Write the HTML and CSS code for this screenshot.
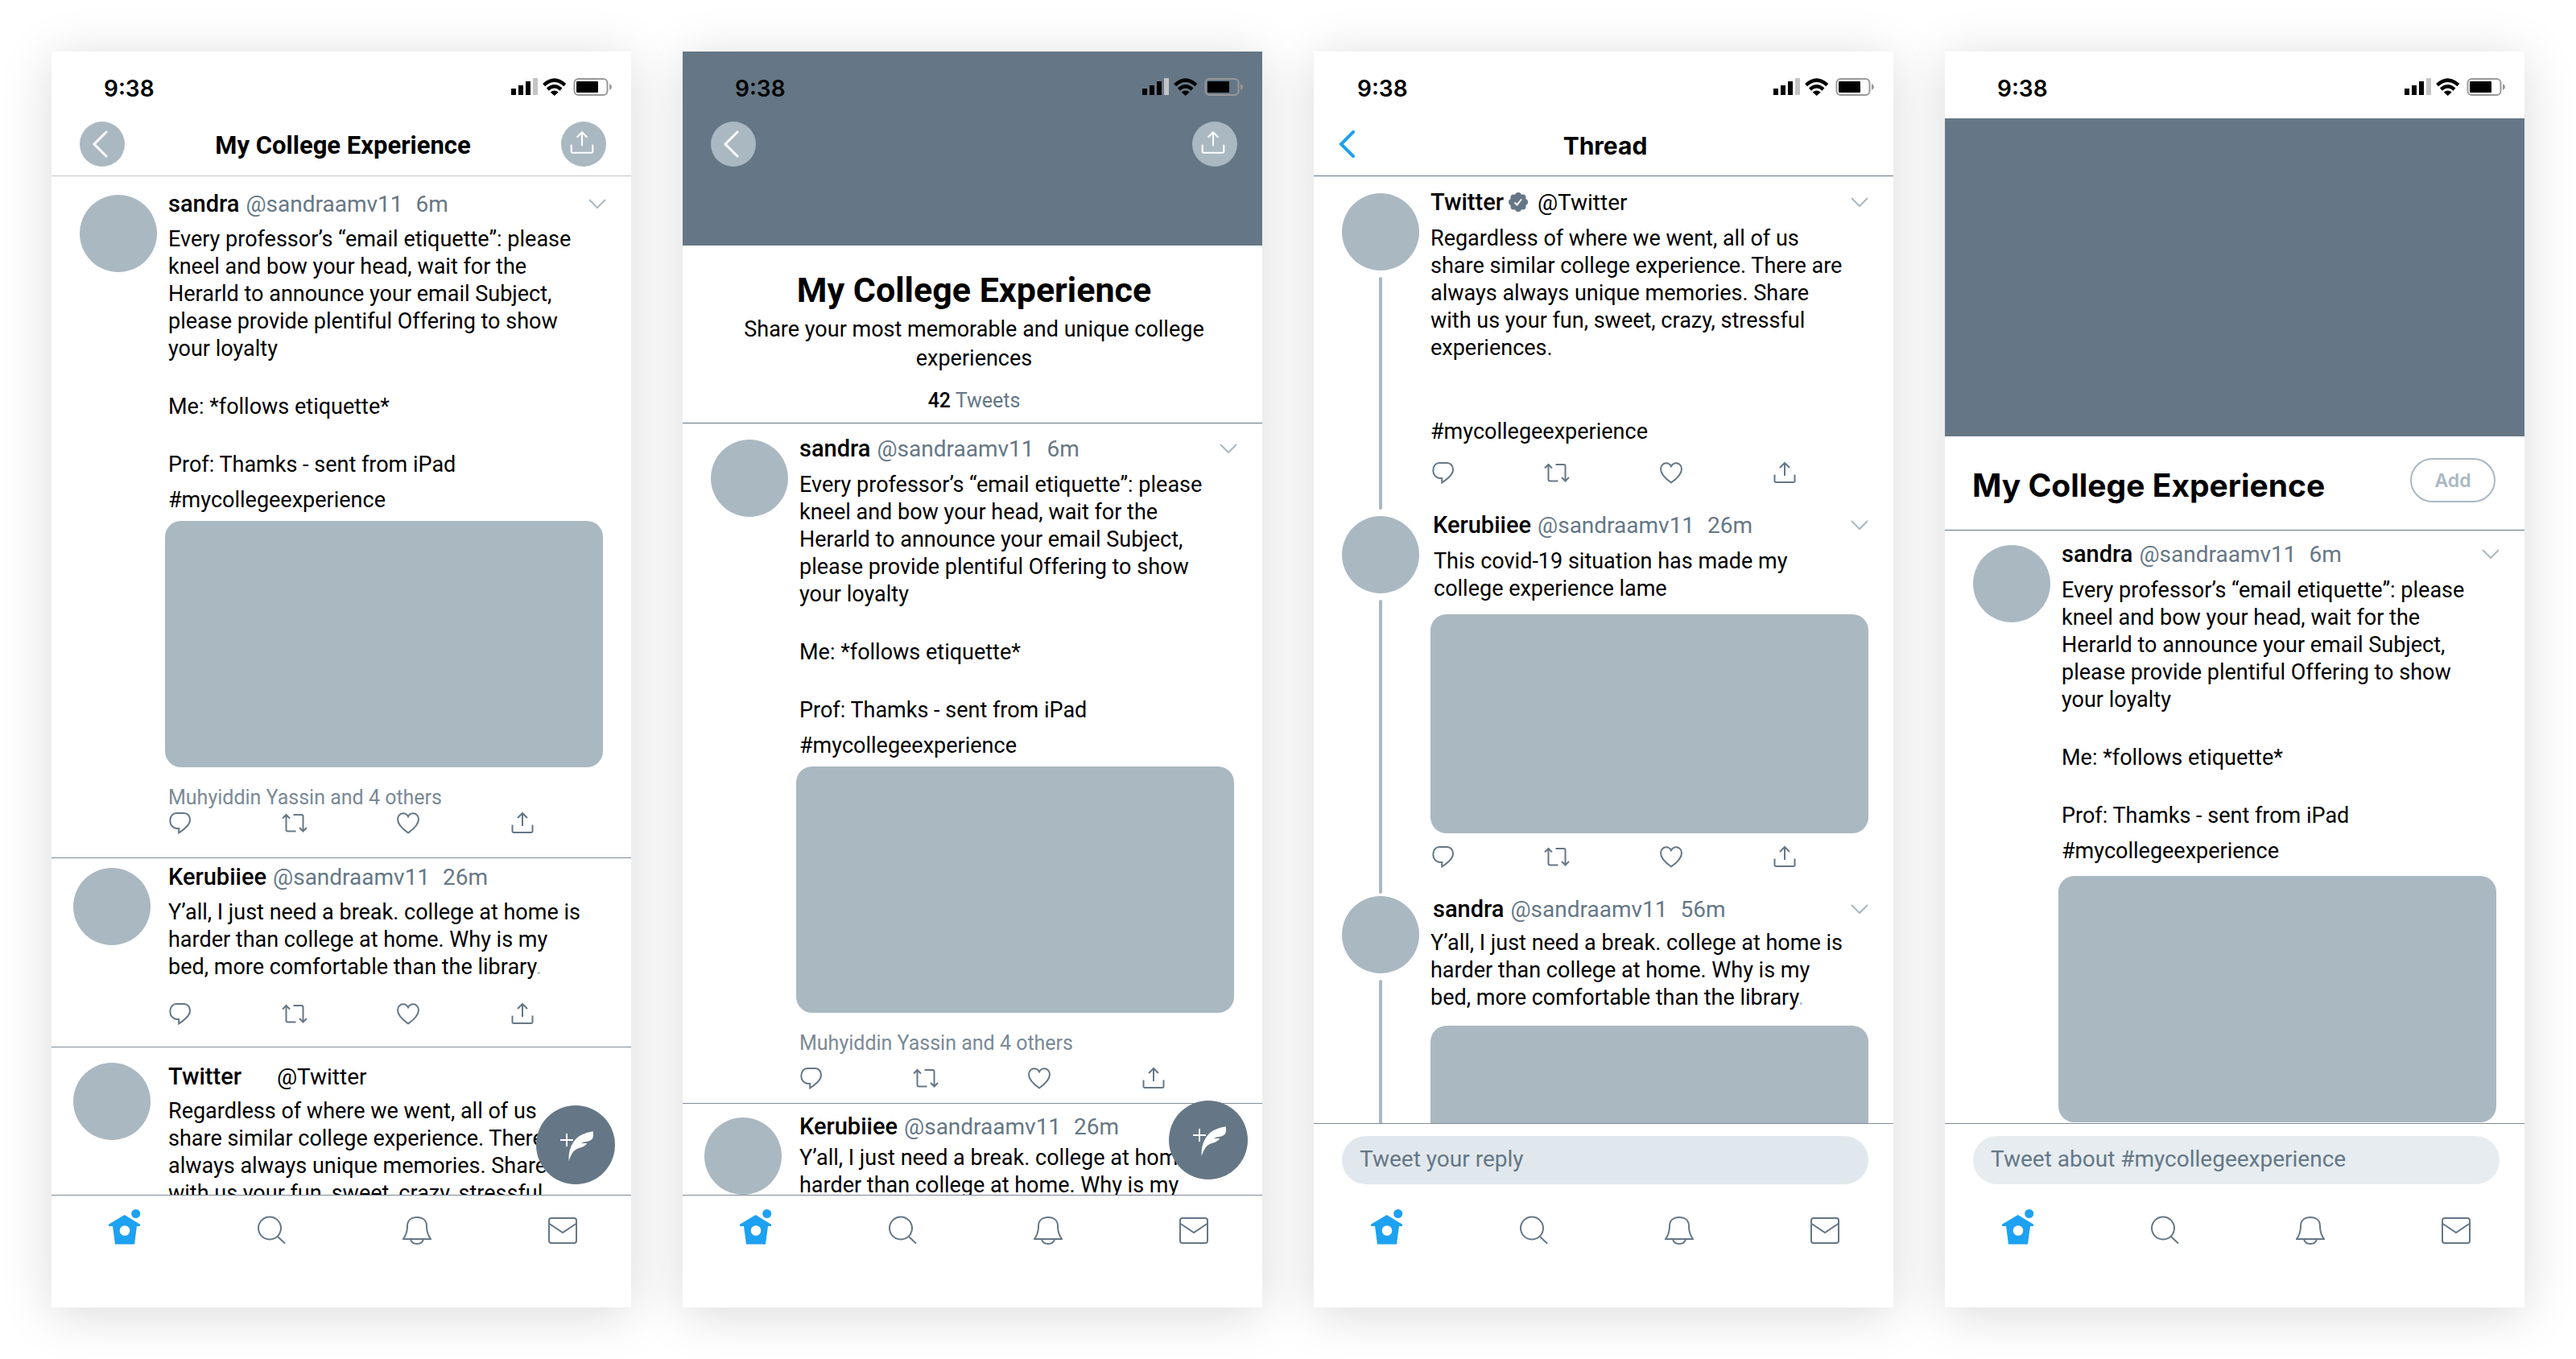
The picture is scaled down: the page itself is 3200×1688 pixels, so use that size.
FILE: index.html
```html
<!DOCTYPE html>
<html lang="en">
<head>
<meta charset="utf-8">
<title>My College Experience</title>
<link rel="stylesheet" href="styles.css">
</head>
<body>
<svg class="sprite" aria-hidden="true">
  <symbol id="status" viewBox="0 0 126 22">
    <path d="M0 13h6v8H0zM9 9h6v12H9zM18 4h6v17h-6z"/>
    <path fill="#c4c4c4" d="M27 0h6v21h-6z"/>
    <path fill="none" stroke="#000" stroke-width="4.4" d="M40.600 8.600Q53.700-3.400 66.800 8.600M45.400 14Q53.700 6.600 62 14"/>
    <path d="M48.700 17.500Q53.700 13.300 58.700 17.500L53.700 22z"/>
    <rect x="78.500" y="1" width="41" height="20" rx="5" fill="none" stroke="#999" stroke-width="2"/>
    <rect x="81" y="4" width="27" height="14" rx="1"/>
    <path fill="#999" d="M122 7q3 1.500 3 4t-3 4z"/>
  </symbol>
  <symbol id="comment" viewBox="0 0 32 32"><path d="M11 4h9.500c4.400 0 7.500 3.400 7.500 8 0 3.600-1.800 6.600-4.600 9.200-2.400 2.400-5.600 5-9.200 7.300v-5.600H12C7 22.900 3.300 18.600 3.300 13.400 3.300 8 6.500 4 11 4z"/></symbol>
  <symbol id="retweet" viewBox="0 0 32 32"><path d="M5.500 6v18.500a2 2 0 0 0 2 2h10M1 10.500 5.500 6l4.500 4.500M14.500 6h10a2 2 0 0 1 2 2v19M22 22l4.500 4.500L31 22"/></symbol>
  <symbol id="heart" viewBox="0 0 32 32"><path d="M16 28.500C11 25 3 19 3 11.500 3 7.500 6 4.200 9.700 4.200c2.600 0 5 1.500 6.300 4 1.300-2.500 3.700-4 6.300-4 3.700 0 6.700 3.300 6.700 7.300 0 7.500-8 13.500-13 17z"/></symbol>
  <symbol id="share" viewBox="0 0 32 32"><path d="M3.500 18.500v8a1.500 1.500 0 0 0 1.500 1.500h22a1.500 1.500 0 0 0 1.500-1.500v-8M16 20V4M10 10l6-6 6 6"/></symbol>
  <symbol id="down" viewBox="0 0 22 14"><path d="M1 2l10 10L21 2"/></symbol>
  <symbol id="back" viewBox="0 0 20 34"><path d="M18 2 3 17l15 15"/></symbol>
  <symbol id="home" viewBox="0 0 40 44"><path fill-rule="evenodd" d="M19.700 7 39 18.800V21h-4l-3 22.500H8L5 21H0v-2.200zM20 20.200a6.300 6.300 0 1 0 0 12.600 6.300 6.300 0 0 0 0-12.600z"/><circle cx="33.700" cy="5.500" r="5.500"/></symbol>
  <symbol id="search" viewBox="0 0 36 36"><circle cx="15" cy="15.500" r="14"/><path d="M25 26l9 8.500"/></symbol>
  <symbol id="bell" viewBox="0 0 36 36"><path d="M1 29C5 23.500 6 18.500 6 13 6 5.500 11 2 18 2s12 3.500 12 11c0 5.500 1 10.500 5 16zM10 29.500c1 3.500 4 5.500 8 5.500s7-2 8-5.500"/></symbol>
  <symbol id="mail" viewBox="0 0 36 36"><rect x="1" y="3" width="34" height="31" rx="3"/><path d="M1.500 10 18 21l16.500-11"/></symbol>
  <symbol id="quill" viewBox="0 0 98 98">
    <path fill="none" stroke="#fff" stroke-width="2" d="M30 43h16M38 35v16"/>
    <path fill="#fff" d="M40.700 69c-.7-9 1.300-17 6-24 5.600-8 14.300-11 24-12.700.6 4 .5 7-.7 9-2 3-6.500 3.700-10.500 4.200-1.600.4-2.500 1-3.200 2 2.400-.6 4.600-.5 7-.2-2.200 3.200-5.800 4.700-10.600 6-6.500 2-9.500 8-12 15.700z"/>
  </symbol>
  <symbol id="verified" viewBox="0 0 24 24">
    <g fill="#657786"><circle cx="12" cy="12" r="9"/><circle cx="12" cy="4" r="4"/><circle cx="12" cy="20" r="4"/><circle cx="4" cy="12" r="4"/><circle cx="20" cy="12" r="4"/><circle cx="6.400" cy="6.400" r="4"/><circle cx="17.600" cy="6.400" r="4"/><circle cx="6.400" cy="17.600" r="4"/><circle cx="17.600" cy="17.600" r="4"/></g>
    <path fill="none" stroke="#fff" stroke-width="2" d="M7.500 12.500l3 3 5.500-7"/>
  </symbol>
</svg>

<main class="board">
  <!-- Moment, scrolled -->
  <section class="phone">
    <div class="status"><time>9:38</time><svg><use href="#status"/></svg></div>
    <header class="bar ruled soft">
      <button class="round" aria-label="Back"><svg class="i-back"><use href="#back"/></svg></button>
      <h1>My College Experience</h1>
      <button class="round" aria-label="Share"><svg class="i-share"><use href="#share"/></svg></button>
    </header>
    <div class="feed">
      <article class="tweet first">
        <div class="rail"><div class="avatar"></div></div>
        <div class="content">
          <div class="byline"><b>sandra</b><a href="#">@sandraamv11</a><span>6m</span><button aria-label="More"><svg><use href="#down"/></svg></button></div>
          <div class="text">
            <p>Every professor’s “email etiquette”: please kneel and bow your head, wait for the Herarld to announce your email Subject, please provide plentiful Offering to show your loyalty</p>
            <p>Me: *follows etiquette*</p>
            <p>Prof: Thamks - sent from iPad</p>
            <p class="tag">#mycollegeexperience</p>
          </div>
          <div class="media"></div>
          <p class="others">Muhyiddin Yassin and 4 others</p>
          <div class="actions"><button aria-label="Reply"><svg><use href="#comment"/></svg></button><button aria-label="Retweet"><svg><use href="#retweet"/></svg></button><button aria-label="Like"><svg><use href="#heart"/></svg></button><button aria-label="Share"><svg><use href="#share"/></svg></button></div>
        </div>
      </article>
      <article class="tweet near short">
        <div class="rail"><div class="avatar"></div></div>
        <div class="content">
          <div class="byline"><b>Kerubiiee</b><a href="#">@sandraamv11</a><span>26m</span></div>
          <div class="text"><p>Y’all, I just need a break. college at home is harder than college at home. Why is my bed, more comfortable than the library<i>.</i></p></div>
          <div class="actions"><button aria-label="Reply"><svg><use href="#comment"/></svg></button><button aria-label="Retweet"><svg><use href="#retweet"/></svg></button><button aria-label="Like"><svg><use href="#heart"/></svg></button><button aria-label="Share"><svg><use href="#share"/></svg></button></div>
        </div>
      </article>
      <article class="tweet near last">
        <div class="rail"><div class="avatar"></div></div>
        <div class="content">
          <div class="byline official plain"><b>Twitter</b><a href="#">@Twitter</a></div>
          <div class="text"><p>Regardless of where we went, all of us share similar college experience. There are always always unique memories. Share with us your fun, sweet, crazy, stressful experiences.</p></div>
        </div>
      </article>
    </div>
    <nav class="tabs ruled-top">
      <button class="compose" aria-label="New Tweet"><svg><use href="#quill"/></svg></button>
      <a href="#" class="home" aria-label="Home"><svg><use href="#home"/></svg></a><a href="#" aria-label="Search"><svg><use href="#search"/></svg></a><a href="#" aria-label="Notifications"><svg><use href="#bell"/></svg></a><a href="#" aria-label="Messages"><svg><use href="#mail"/></svg></a>
    </nav>
  </section>

  <!-- Moment, cover -->
  <section class="phone cover">
    <div class="banner">
      <div class="status"><time>9:38</time><svg><use href="#status"/></svg></div>
      <div class="bar">
        <button class="round" aria-label="Back"><svg class="i-back"><use href="#back"/></svg></button>
        <button class="round" aria-label="Share"><svg class="i-share"><use href="#share"/></svg></button>
      </div>
    </div>
    <header class="intro ruled">
      <h1>My College Experience</h1>
      <p>Share your most memorable and unique college experiences</p>
      <p class="count"><b>42</b> Tweets</p>
    </header>
    <div class="feed">
      <article class="tweet first">
        <div class="rail"><div class="avatar"></div></div>
        <div class="content">
          <div class="byline"><b>sandra</b><a href="#">@sandraamv11</a><span>6m</span><button aria-label="More"><svg><use href="#down"/></svg></button></div>
          <div class="text">
            <p>Every professor’s “email etiquette”: please kneel and bow your head, wait for the Herarld to announce your email Subject, please provide plentiful Offering to show your loyalty</p>
            <p>Me: *follows etiquette*</p>
            <p>Prof: Thamks - sent from iPad</p>
            <p class="tag">#mycollegeexperience</p>
          </div>
          <div class="media"></div>
          <p class="others">Muhyiddin Yassin and 4 others</p>
          <div class="actions"><button aria-label="Reply"><svg><use href="#comment"/></svg></button><button aria-label="Retweet"><svg><use href="#retweet"/></svg></button><button aria-label="Like"><svg><use href="#heart"/></svg></button><button aria-label="Share"><svg><use href="#share"/></svg></button></div>
        </div>
      </article>
      <article class="tweet near last">
        <div class="rail"><div class="avatar"></div></div>
        <div class="content">
          <div class="byline"><b>Kerubiiee</b><a href="#">@sandraamv11</a><span>26m</span></div>
          <div class="text"><p>Y’all, I just need a break. college at home is harder than college at home. Why is my bed, more comfortable than the library<i>.</i></p></div>
        </div>
      </article>
    </div>
    <nav class="tabs ruled-top">
      <button class="compose" aria-label="New Tweet"><svg><use href="#quill"/></svg></button>
      <a href="#" class="home" aria-label="Home"><svg><use href="#home"/></svg></a><a href="#" aria-label="Search"><svg><use href="#search"/></svg></a><a href="#" aria-label="Notifications"><svg><use href="#bell"/></svg></a><a href="#" aria-label="Messages"><svg><use href="#mail"/></svg></a>
    </nav>
  </section>

  <!-- Thread -->
  <section class="phone thread">
    <div class="status"><time>9:38</time><svg><use href="#status"/></svg></div>
    <header class="bar ruled">
      <button class="bare" aria-label="Back"><svg class="i-back"><use href="#back"/></svg></button>
      <h1>Thread</h1>
    </header>
    <div class="feed">
      <article class="tweet lead">
        <div class="rail"><div class="avatar"></div></div>
        <div class="content">
          <div class="byline official"><b>Twitter</b><svg class="badge" role="img" aria-label="Verified"><use href="#verified"/></svg><a href="#">@Twitter</a><button aria-label="More"><svg><use href="#down"/></svg></button></div>
          <div class="text">
            <p>Regardless of where we went, all of us share similar college experience. There are always always unique memories. Share with us your fun, sweet, crazy, stressful experiences.</p>
            <p class="tag">#mycollegeexperience</p>
          </div>
          <div class="actions"><button aria-label="Reply"><svg><use href="#comment"/></svg></button><button aria-label="Retweet"><svg><use href="#retweet"/></svg></button><button aria-label="Like"><svg><use href="#heart"/></svg></button><button aria-label="Share"><svg><use href="#share"/></svg></button></div>
        </div>
      </article>
      <article class="tweet reply inset">
        <div class="rail"><div class="avatar"></div></div>
        <div class="content">
          <div class="byline"><b>Kerubiiee</b><a href="#">@sandraamv11</a><span>26m</span><button aria-label="More"><svg><use href="#down"/></svg></button></div>
          <div class="text"><p>This covid-19 situation has made my college experience lame</p></div>
          <div class="media"></div>
          <div class="actions"><button aria-label="Reply"><svg><use href="#comment"/></svg></button><button aria-label="Retweet"><svg><use href="#retweet"/></svg></button><button aria-label="Like"><svg><use href="#heart"/></svg></button><button aria-label="Share"><svg><use href="#share"/></svg></button></div>
        </div>
      </article>
      <article class="tweet reply last">
        <div class="rail"><div class="avatar"></div></div>
        <div class="content">
          <div class="byline"><b>sandra</b><a href="#">@sandraamv11</a><span>56m</span><button aria-label="More"><svg><use href="#down"/></svg></button></div>
          <div class="text"><p>Y’all, I just need a break. college at home is harder than college at home. Why is my bed, more comfortable than the library<i>.</i></p></div>
          <div class="media"></div>
        </div>
      </article>
    </div>
    <form class="composer"><input type="text" aria-label="Tweet your reply" placeholder="Tweet your reply"></form>
    <nav class="tabs">
      <a href="#" class="home" aria-label="Home"><svg><use href="#home"/></svg></a><a href="#" aria-label="Search"><svg><use href="#search"/></svg></a><a href="#" aria-label="Notifications"><svg><use href="#bell"/></svg></a><a href="#" aria-label="Messages"><svg><use href="#mail"/></svg></a>
    </nav>
  </section>

  <!-- Topic -->
  <section class="phone topic">
    <div class="status"><time>9:38</time><svg><use href="#status"/></svg></div>
    <div class="hero"></div>
    <header class="titlebar ruled"><h1>My College Experience</h1><button class="add">Add</button></header>
    <div class="feed">
      <article class="tweet first">
        <div class="rail"><div class="avatar"></div></div>
        <div class="content">
          <div class="byline"><b>sandra</b><a href="#">@sandraamv11</a><span>6m</span><button aria-label="More"><svg><use href="#down"/></svg></button></div>
          <div class="text">
            <p>Every professor’s “email etiquette”: please kneel and bow your head, wait for the Herarld to announce your email Subject, please provide plentiful Offering to show your loyalty</p>
            <p>Me: *follows etiquette*</p>
            <p>Prof: Thamks - sent from iPad</p>
            <p class="tag">#mycollegeexperience</p>
          </div>
          <div class="media"></div>
        </div>
      </article>
    </div>
    <form class="composer"><input type="text" aria-label="Tweet about #mycollegeexperience" placeholder="Tweet about #mycollegeexperience"></form>
    <nav class="tabs">
      <a href="#" class="home" aria-label="Home"><svg><use href="#home"/></svg></a><a href="#" aria-label="Search"><svg><use href="#search"/></svg></a><a href="#" aria-label="Notifications"><svg><use href="#bell"/></svg></a><a href="#" aria-label="Messages"><svg><use href="#mail"/></svg></a>
    </nav>
  </section>
</main>
</body>
</html>
```
FILE: styles.css
```css
:root {
  --slate: #657786;
  --mist: #aab8c2;
  --rule: #7e8c99;
  --blue: #1da1f2;
}

* { box-sizing: border-box; }

body {
  margin: 0;
  background: #fff;
  color: #000;
  font-family: Roboto, "Liberation Sans", sans-serif;
  font-size: 27px;
  line-height: 34px;
}

h1, p { margin: 0; }
a { color: inherit; text-decoration: none; }
svg { display: block; fill: none; }
button {
  display: block;
  padding: 0;
  border: 0;
  background: none;
  color: inherit;
  font: inherit;
}

.sprite { position: absolute; width: 0; height: 0; }

.board {
  display: grid;
  grid-template-columns: repeat(4, minmax(0, 1fr));
  gap: 64px;
  padding: 64px;
}

.phone {
  display: flex;
  flex-direction: column;
  height: calc(100vh - 128px);
  min-width: 0;
  background: #fff;
  box-shadow: 0 8px 60px rgba(0, 0, 0, .15);
}

/* Status bar */
.status {
  display: flex;
  justify-content: space-between;
  flex: none;
  height: 83px;
  padding: 28px 23px 0 65px;
}
.status time { font: 600 28px/36px Inter, sans-serif; }
.status svg { width: 126px; height: 22px; margin-top: 5px; fill: #000; }

/* Title bars */
.bar {
  display: flex;
  align-items: center;
  justify-content: space-between;
  flex: none;
  height: 72px;
  padding: 4px 31px 12px 35px;
}
.bar h1 { padding-top: 4px; font-size: 31px; line-height: 56px; font-weight: 700; }
.ruled { border-bottom: 1px solid var(--slate); }
.ruled.soft { border-color: #c4c4c4; }
.round {
  display: grid;
  place-items: center;
  width: 56px;
  height: 56px;
  border-radius: 50%;
  background: var(--mist);
  stroke: #fff;
  stroke-width: 3;
}
.i-back { width: 20px; height: 34px; margin-right: 6px; stroke-linecap: round; }
.i-share { width: 34px; height: 34px; margin: 0 4px 4px 0; stroke-width: 2; }

/* Feed */
.feed { flex: 1; min-height: 0; overflow: hidden; }
.tweet {
  --gap: 10px;
  display: grid;
  grid-template-columns: 96px minmax(0, 1fr);
  column-gap: 10px;
  padding: 17px 31px 27px 35px;
  border-bottom: 1px solid var(--rule);
}
.tweet.last { border: 0; }
.tweet.near { column-gap: 18px; padding-left: 27px; }
.tweet.short { padding-top: 6px; padding-bottom: 25px; }
.tweet.short .actions { margin-top: 25px; }
.near.last { --gap: 9px; padding-top: 19px; }
.near.last .avatar { margin-top: 0; }

.rail { display: flex; flex-direction: column; align-items: center; }
.avatar {
  flex: none;
  width: 96px;
  height: 96px;
  margin-top: 6px;
  border-radius: 50%;
  background: var(--mist);
}

.byline {
  display: flex;
  align-items: baseline;
  height: 34px;
  margin-bottom: var(--gap);
  padding-left: 4px;
  color: var(--slate);
  font-size: 28px;
}
.byline b { margin-right: 8px; color: #000; font-size: 29px; font-weight: 500; }
.byline span { margin-left: 16px; }
.byline button { align-self: center; margin-left: auto; }
.byline button svg { width: 22px; height: 14px; stroke: var(--mist); stroke-width: 2; }
.byline.official a { color: #000; }
.byline.plain b { margin-right: 44px; }
.byline .badge { align-self: center; width: 24px; height: 24px; margin-right: 12px; }

.text { padding: 0 28px 0 4px; }
.text p + p { margin-top: 38px; }
.text p + .tag { margin-top: 10px; }
.text i { color: var(--mist); font-style: normal; }
.media { height: 306px; margin: 9px 4px 0 0; border-radius: 20px; background: var(--mist); }
.others { margin-top: 23px; padding-left: 4px; color: #7a8996; font-size: 25px; line-height: 30px; }
.actions {
  display: flex;
  justify-content: space-between;
  margin: 0 88px 0 3px;
  stroke: var(--slate);
  stroke-width: 2;
}
.actions svg { width: 32px; height: 32px; }

/* Cover screen */
.banner { flex: none; height: 241px; background: var(--slate); }
.intro { flex: none; padding: 30px 46px 12px 50px; text-align: center; }
.intro h1 { font-size: 43px; line-height: 50px; font-weight: 700; }
.intro p { margin-top: 6px; line-height: 36px; }
.intro .count { margin-top: 20px; color: var(--slate); font-size: 25px; line-height: 30px; }
.count b { color: #000; font-weight: 500; }
.cover .first { --gap: 11px; padding-top: 14px; padding-bottom: 15px; }
.cover .first .actions { margin-top: 12px; }
.cover .last { --gap: 5px; padding-top: 11px; }
.cover .last .avatar { margin-top: 6px; }

/* Thread screen */
.thread .status { padding-left: 54px; }
.thread .bar { position: relative; justify-content: center; }
.thread h1 { font-family: Inter, sans-serif; font-size: 30px; }
.bare { position: absolute; left: 31px; top: 15px; stroke: var(--blue); stroke-width: 4; }
.thread .tweet { --gap: 11px; column-gap: 14px; padding-top: 0; padding-bottom: 0; border: 0; }
.thread .lead { padding-top: 15px; }
.thread .rail::after {
  content: "";
  flex: 1;
  width: 4px;
  margin: 8px 0 2px;
  border-radius: 2px;
  background: var(--mist);
}
.thread .byline { padding-left: 0; }
.thread .reply .byline { padding-left: 3px; }
.thread .lead .byline b { margin-right: 6px; }
.thread .text { padding-left: 0; }
.thread .inset .text { padding-left: 4px; }
.thread .lead .tag { margin-top: 70px; }
.thread .actions { margin: 18px 88px 32px 0; }
.thread .media { height: 272px; margin: 15px 0 0; }
.thread .inset .actions { margin-top: 13px; }
.thread .last { --gap: 8px; }
.thread .last .avatar { margin-top: 1px; }
.thread .last .media { margin-top: 18px; }

/* Topic screen */
.hero { flex: none; height: 395px; background: var(--slate); }
.titlebar {
  display: flex;
  justify-content: space-between;
  flex: none;
  padding: 27px 36px 31px 34px;
}
.titlebar h1 { margin-top: 10px; font: 700 39px/48px Inter, sans-serif; }
.add {
  width: 106px;
  height: 55px;
  border: 2px solid var(--mist);
  border-radius: 28px;
  color: var(--mist);
  font: 600 23px/50px Inter, sans-serif;
}
.topic .first { --gap: 11px; padding-top: 12px; padding-bottom: 0; border: 0; }
.topic .media { margin-top: 14px; }

/* Bottom controls */
.composer { flex: none; padding: 15px 31px 13px 35px; border-top: 1px solid var(--rule); }
.composer input {
  display: block;
  width: 100%;
  height: 60px;
  padding: 0 22px 4px;
  border: 0;
  border-radius: 30px;
  background: #e1e8ed;
  font: 28px Roboto, sans-serif;
}
.composer input::placeholder { color: var(--slate); opacity: 1; }
.topic .composer input { background: #e6ecf0; }

.tabs {
  position: relative;
  display: flex;
  align-items: flex-end;
  justify-content: space-between;
  flex: none;
  height: 140px;
  padding: 0 67px 78px 71px;
  border-top: 1px solid transparent;
  background: #fff;
  stroke: var(--slate);
  stroke-width: 2;
}
.tabs.ruled-top { border-color: var(--rule); }
.tabs a svg { width: 36px; height: 36px; }
.tabs .home svg { width: 40px; height: 44px; fill: var(--blue); stroke: none; }
.compose {
  position: absolute;
  right: 20px;
  bottom: 153px;
  width: 98px;
  height: 98px;
  border-radius: 50%;
  background: var(--slate);
}
.compose svg { width: 98px; height: 98px; stroke: none; }
.cover .compose { right: 18px; bottom: 159px; }
```
